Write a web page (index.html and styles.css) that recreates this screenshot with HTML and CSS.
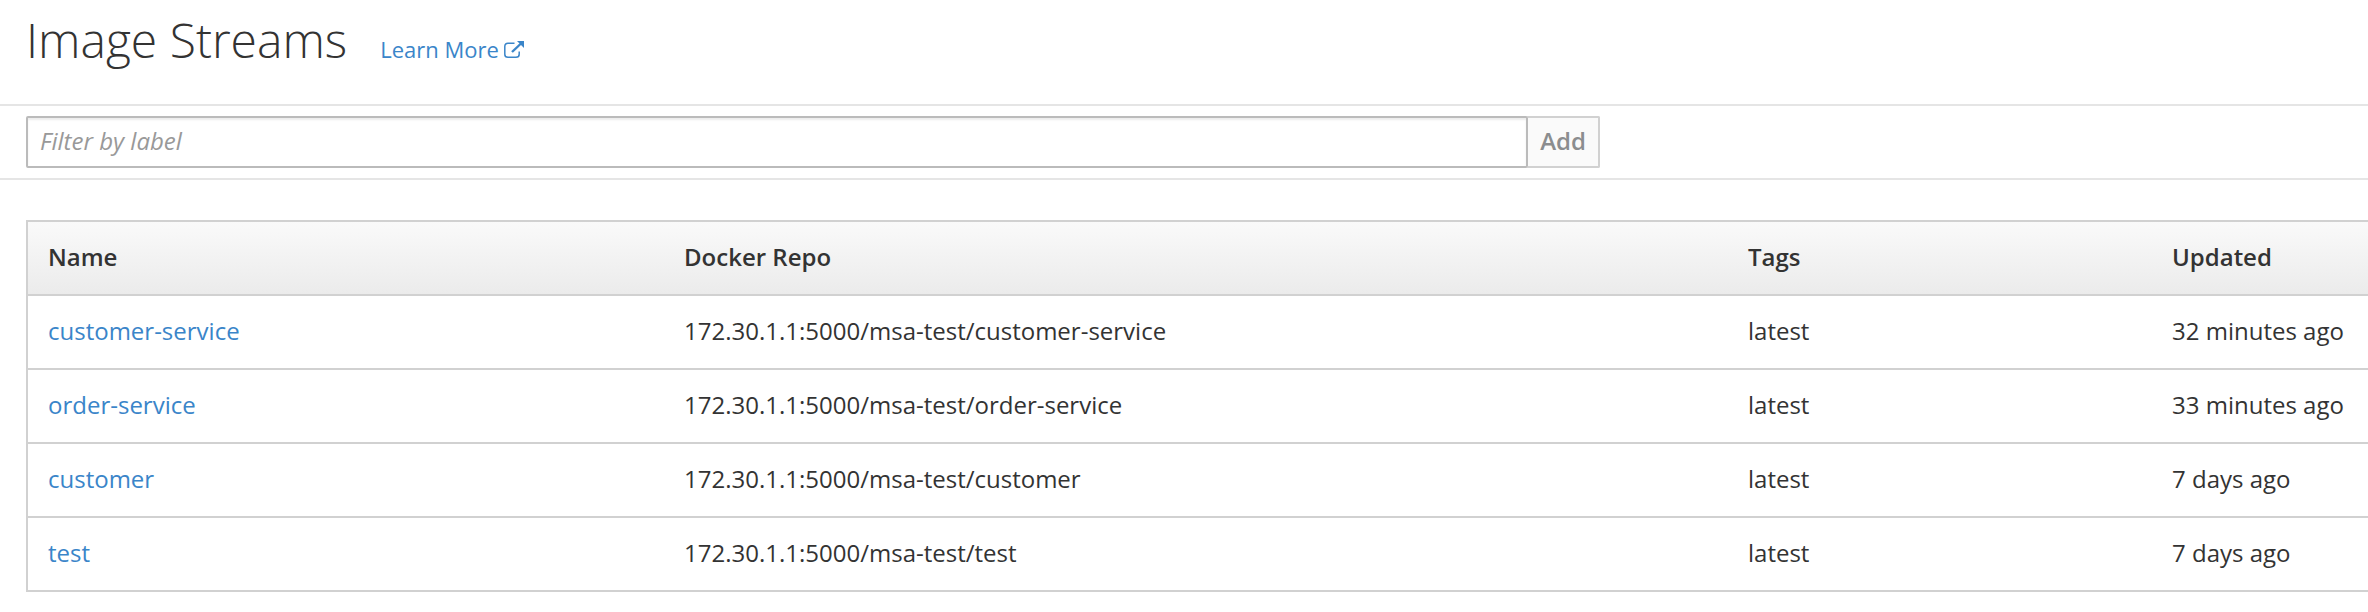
FILE: index.html
```
<!DOCTYPE html>
<html lang="en">
<head>
<meta charset="utf-8">
<title>Image Streams</title>
<link rel="stylesheet" href="styles.css">
</head>
<body>
<header class="page-header">
<h1 class="title">Image Streams</h1>
<a class="learn-more">Learn More<svg class="external" viewBox="0 0 20 20"><path d="M10.500 3.300H4Q0.800 3.300 0.800 6.500V14.200Q0.800 17.300 4 17.300H12Q15.200 17.300 15.200 14.200V11.500" fill="none" stroke="currentColor" stroke-width="1.500"/><path d="M8 12L17 3.500" stroke="currentColor" stroke-width="2.400"/><path d="M13 1H20V8Z" fill="currentColor"/></svg></a>
</header>
<section class="filter">
<input class="filter-input" placeholder="Filter by label"><button class="add">Add</button>
</section>
<table class="streams">
<colgroup><col class="c-name"><col class="c-repo"><col class="c-tags"><col class="c-updated"></colgroup>
<thead><tr><th>Name</th><th>Docker Repo</th><th>Tags</th><th>Updated</th></tr></thead>
<tbody>
<tr><td><a>customer-service</a></td><td>172.30.1.1:5000/msa-test/customer-service</td><td>latest</td><td>32 minutes ago</td></tr>
<tr><td><a>order-service</a></td><td>172.30.1.1:5000/msa-test/order-service</td><td>latest</td><td>33 minutes ago</td></tr>
<tr><td><a>customer</a></td><td>172.30.1.1:5000/msa-test/customer</td><td>latest</td><td>7 days ago</td></tr>
<tr><td><a>test</a></td><td>172.30.1.1:5000/msa-test/test</td><td>latest</td><td>7 days ago</td></tr>
</tbody>
</table>
</body>
</html>
```
FILE: styles.css
```
* { box-sizing: border-box; }
body { margin: 0; background: #fff; color: #333; font-family: "Open Sans", sans-serif; font-size: 24px; line-height: 40px; overflow: hidden; }
a { color: #3a85c9; }
.page-header { display: flex; align-items: baseline; height: 104px; padding: 6px 26px 0; }
.title { margin: 0; font-size: 48px; font-weight: 300; line-height: 68px; }
.learn-more { margin-left: 33px; font-size: 22px; }
.external { width: 20px; height: 20px; margin-left: 5px; vertical-align: -2px; }
.filter { display: flex; height: 76px; padding: 10px 26px; border-top: 2px solid #e5e5e5; border-bottom: 2px solid #e5e5e5; }
.filter-input { width: 1502px; height: 52px; padding: 0 12px 4px; border: 2px solid #bbb; border-radius: 2px 0 0 2px; box-shadow: inset 0 2px 2px rgba(0, 0, 0, 0.075); font: 24px "Open Sans", sans-serif; }
.filter-input::placeholder { color: #999; font-style: italic; opacity: 1; }
.add { width: 74px; height: 52px; margin-left: -2px; padding: 0 0 4px; border: 2px solid #d1d1d1; border-left-color: #bbb; border-radius: 0 2px 2px 0; background: #fafafa; color: #8b8d8f; font: 600 24px "Open Sans", sans-serif; }
.streams { width: 2368px; margin: 40px 0 0 26px; table-layout: fixed; border-collapse: collapse; border: 2px solid #d1d1d1; }
.streams tr { height: 74px; }
.streams th, .streams td { padding: 0 20px 3px; border-bottom: 2px solid #d1d1d1; text-align: left; white-space: nowrap; }
.streams th { font-weight: 600; }
.streams thead { background: linear-gradient(#fafafa, #ebebeb); }
.c-name { width: 637px; }
.c-repo { width: 1064px; }
.c-tags { width: 424px; }
```
